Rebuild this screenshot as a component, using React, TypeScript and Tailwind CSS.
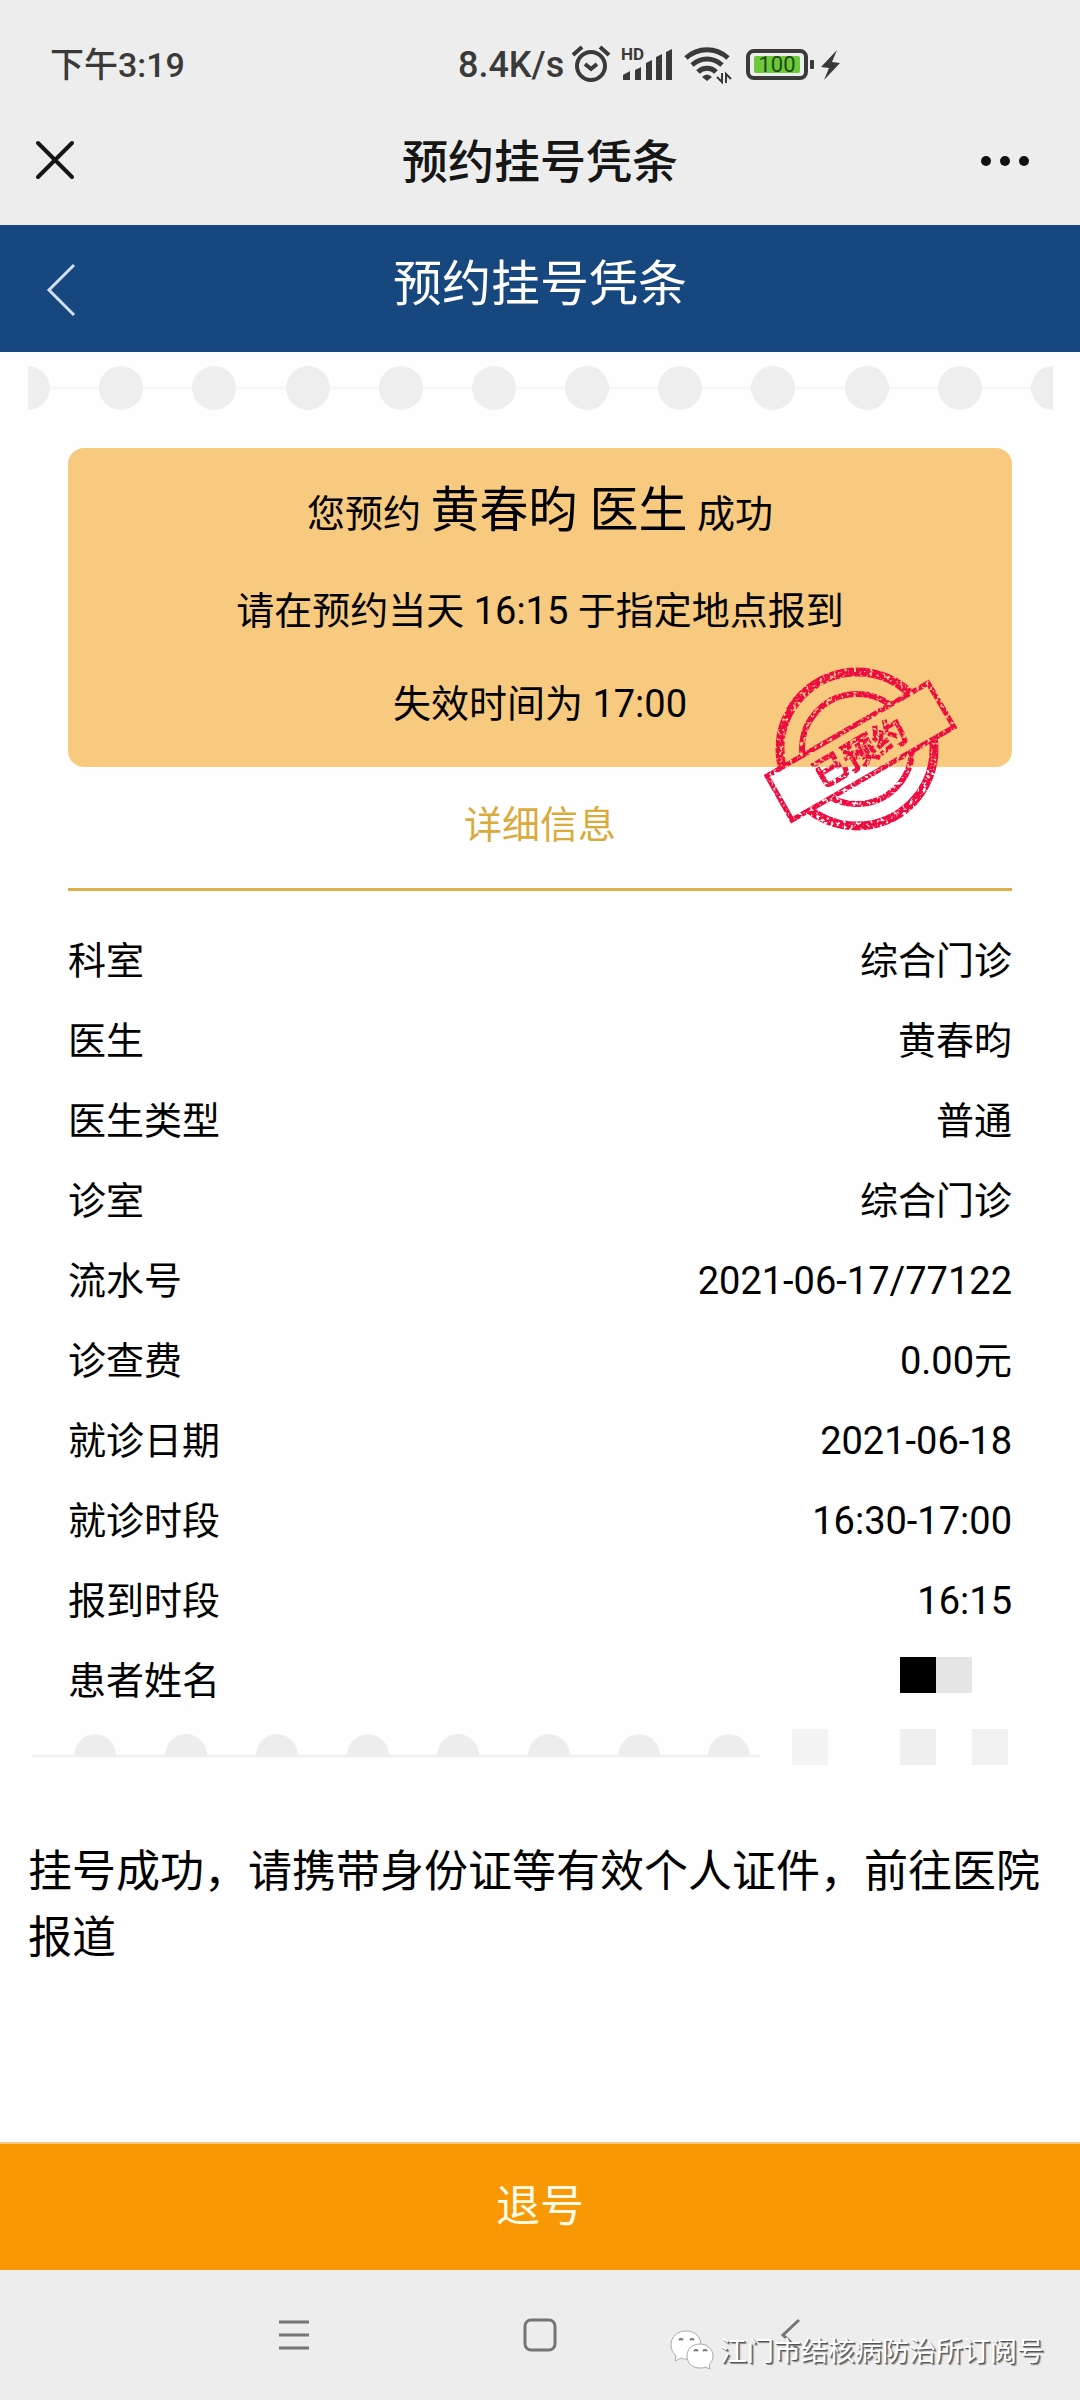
import React from 'react';

interface DetailRow {
  label: string;
  value?: string;
}

const details: DetailRow[] = [
  { label: '科室', value: '综合门诊' },
  { label: '医生', value: '黄春昀' },
  { label: '医生类型', value: '普通' },
  { label: '诊室', value: '综合门诊' },
  { label: '流水号', value: '2021-06-17/77122' },
  { label: '诊查费', value: '0.00元' },
  { label: '就诊日期', value: '2021-06-18' },
  { label: '就诊时段', value: '16:30-17:00' },
  { label: '报到时段', value: '16:15' },
  { label: '患者姓名' },
];

function StatusBar() {
  return (
    <div className="flex h-[100px] items-center gap-[273px] px-[50px] pt-[30px] text-[34px] font-medium text-[#3a3a3a]">
      <span>下午3:19</span>
      <div className="flex items-center">
        <span className="text-[36px]">8.4K/s</span>
        <StatusIcons />
      </div>
    </div>
  );
}

function StatusIcons() {
  return (
    <svg width="276" height="40" viewBox="0 0 276 40" className="ml-1" fill="none" stroke="#3a3a3a" aria-hidden="true">
      {/* alarm */}
      <circle cx="23" cy="21" r="14" strokeWidth="4" />
      <path d="M17 19l6 5 6-5" strokeWidth="4" />
      <path d="M5 10l9-8M41 10l-9-8" strokeWidth="4" />

      {/* signal */}
      <text x="53" y="15" fontSize="17" fontWeight="700" fill="#3a3a3a" stroke="none">HD</text>
      <path d="M55 30l7-4v9h-7zM67 25l6-3v13h-6zM78 18l6-3v20h-6zM88 12l6-3v26h-6zM98 7l6-3v31h-6z" fill="#3a3a3a" stroke="none" />

      {/* wifi */}
      <path d="M118 13c12-11 30-11 42 0" strokeWidth="5" />
      <path d="M124 20c9-8 21-8 30 0" strokeWidth="5" />
      <path d="M130 27c5-5 13-5 18 0" strokeWidth="5" />
      <path d="M134 32q5-5 10 0l-5 4z" fill="#3a3a3a" stroke="none" />
      <path d="M154 28v9l-5-5M158 38v-9l5 5" strokeWidth="2" />

      {/* battery */}
      <rect x="180" y="6" width="58" height="27" rx="6" strokeWidth="4" />
      <rect x="186" y="11" width="46" height="17" rx="2" fill="#6cc93a" stroke="none" />
      <text x="209" y="27" fontSize="22" fontWeight="400" textAnchor="middle" fill="#1f4a12" stroke="none">100</text>
      <rect x="242" y="15" width="4" height="9" rx="1" fill="#3a3a3a" stroke="none" />
      <path d="M269 5l-16 17 8 1-5 12 16-17-8-1z" fill="#3a3a3a" stroke="none" />
    </svg>
  );
}

function BrowserBar() {
  return (
    <div className="flex h-[125px] items-center justify-between px-8">
      <button type="button" aria-label="关闭" className="mb-1 flex w-[72px]">
        <svg width="44" height="44" viewBox="0 0 44 44" fill="none" stroke="#161616" strokeWidth="4" strokeLinecap="round">
          <path d="M6 4l34 34M40 4L6 38" />
        </svg>
      </button>
      <h1 className="text-[46px] font-medium text-[#161616]">预约挂号凭条</h1>
      <button type="button" aria-label="更多" className="mb-1 flex w-[72px]">
        <svg width="72" height="16" viewBox="0 0 72 16" fill="#111111">
          <circle cx="10" cy="8" r="5" />
          <circle cx="29" cy="8" r="5" />
          <circle cx="48" cy="8" r="5" />
        </svg>
      </button>
    </div>
  );
}

function PageHeader() {
  return (
    <header className="flex h-[127px] items-center justify-between bg-[#17477f] px-10 text-white">
      <button type="button" aria-label="返回" className="flex w-12">
        <svg width="40" height="56" viewBox="0 0 40 56" fill="none" stroke="#d3dff2" strokeWidth="3">
          <path d="M34 4L9 29l25 25" />
        </svg>
      </button>
      <h2 className="pb-2 text-[49px]">预约挂号凭条</h2>
      <span className="w-12" />
    </header>
  );
}

/* perforated edge along the top of the ticket */
function TopEdge() {
  return (
    <svg viewBox="0 0 1080 48" className="mt-3 block w-full" aria-hidden="true">
      <path d="M28 24h1025" stroke="#f6f6f6" strokeWidth="3" />
      <path d="M28 2a22 22 0 0 1 0 44zM1053 2a22 22 0 0 0 0 44z" fill="#eeeeee" />
      {[121, 214, 308, 401, 494, 587, 680, 773, 867, 960].map((cx) => (
        <circle key={cx} cx={cx} cy="24" r="22" fill="#eeeeee" />
      ))}
    </svg>
  );
}

function BottomEdge() {
  return (
    <svg viewBox="0 0 1080 44" className="mt-1 block w-full" aria-hidden="true">
      <path d="M32 31h728" stroke="#f1f1f1" strokeWidth="3" />
      {[95, 186, 277, 368, 458, 549, 639, 729].map((cx) => (
        <path key={cx} d={`M${cx - 21} 31a21 22 0 0 1 42 0z`} fill="#ededed" />
      ))}
      <rect x="792" y="4" width="36" height="36" fill="#f4f4f4" />
      <rect x="900" y="4" width="36" height="36" fill="#efefef" />
      <rect x="972" y="4" width="36" height="36" fill="#f1f1f1" />
    </svg>
  );
}

function Stamp() {
  return (
    <svg width="240" height="200" viewBox="0 0 240 200" className="absolute right-8 -bottom-[82px]" fill="none" stroke="#ee1140">
      <defs>
        <filter id="worn" filterUnits="userSpaceOnUse" x="0" y="0" width="240" height="200">
          <feTurbulence type="fractalNoise" baseFrequency="0.3" numOctaves="3" seed="4" result="noise" />
          <feColorMatrix in="noise" type="matrix" values="0 0 0 0 0  0 0 0 0 0  0 0 0 0 0  0 0 0 -6 4.2" result="holes" />
          <feComposite in="SourceGraphic" in2="holes" operator="in" />
        </filter>
        <clipPath id="outside">
          <path clipRule="evenodd" d="M0 0H240V200H0zM25 126L188 32L216 78L52 173z" />
        </clipPath>
      </defs>
      <g filter="url(#worn)">
        <g clipPath="url(#outside)">
          <circle cx="117" cy="100" r="77" strokeWidth="9" />
          <circle cx="117" cy="100" r="55" strokeWidth="6" />
        </g>
        <path d="M27 127L188 34L214 78L52 171z" strokeWidth="5" />
        <text
          x="120"
          y="116"
          fontSize="34"
          fontWeight="700"
          textAnchor="middle"
          fill="#ee1140"
          strokeWidth="1"
          transform="rotate(-30 120 104)"
        >
          已预约
        </text>
      </g>
    </svg>
  );
}

function DetailTable() {
  return (
    <table className="mt-[30px] w-full">
      <tbody>
        {details.map((row) => (
          <tr key={row.label} className="h-20">
            <th scope="row" className="text-left font-normal">{row.label}</th>
            <td className="text-right">
              {row.value ?? (
                <span className="mr-10 mb-3 flex justify-end">
                  <span className="size-9 bg-black" />
                  <span className="size-9 bg-[#e5e5e5]" />
                </span>
              )}
            </td>
          </tr>
        ))}
      </tbody>
    </table>
  );
}

function SystemNav() {
  return (
    <nav className="relative flex h-[130px] items-center justify-center gap-[210px] bg-[#ededed]">
      <button type="button" aria-label="最近任务">
        <svg width="36" height="36" viewBox="0 0 36 36" stroke="#757575" strokeWidth="3">
          <path d="M3 5h30M3 18h30M3 31h30" />
        </svg>
      </button>
      <button type="button" aria-label="主屏幕">
        <svg width="36" height="36" viewBox="0 0 36 36" fill="none" stroke="#757575" strokeWidth="3">
          <rect x="3" y="3" width="30" height="30" rx="6" />
        </svg>
      </button>
      <button type="button" aria-label="返回上一页">
        <svg width="36" height="36" viewBox="0 0 36 36" fill="none" stroke="#757575" strokeWidth="3">
          <path d="M31 3L15 18l16 15" />
        </svg>
      </button>

      {/* account watermark */}
      <div className="absolute right-9 bottom-[26px] flex items-center gap-1.5 text-[27px] text-white [text-shadow:1px_1px_0_#555,2px_2px_1px_#888]">
        <svg width="44" height="40" viewBox="0 0 44 40" className="mb-1" fill="#fff" stroke="#aaa" strokeWidth="1">
          <path d="M16 1C7 1 1 7 1 15c0 5 2 8 5 11l-1 5 6-3c2 1 3 1 5 1 9 0 15-6 15-14S25 1 16 1z" />
          <path d="M30 14c-8 0-13 5-13 12s5 12 13 12c2 0 4 0 5-1l5 2-1-4c2-2 4-5 4-9 0-7-6-12-13-12z" />
          <path d="M9 10q2-2 4 0M20 10q2-2 4 0M24 21q2-2 4 0M33 21q2-2 4 0" fill="none" stroke="#777" strokeWidth="2" />
        </svg>
        <span>江门市结核病防治所订阅号</span>
      </div>
    </nav>
  );
}

export default function App() {
  return (
    <div lang="zh-CN" className="flex min-h-screen flex-col bg-[#fefefe] font-[Roboto,'Noto_Sans_CJK_SC',sans-serif] text-black">
      <div className="bg-[#ededed]">
        <StatusBar />
        <BrowserBar />
      </div>
      <PageHeader />

      <main className="flex-1">
        <TopEdge />
        <div className="mx-[68px] mt-9 text-[38px]">
          <section className="relative rounded-2xl bg-[#f7ca80] py-4 text-center leading-[93px]">
            <p className="mb-1">
              您预约 <span className="text-[49px]">黄春昀 医生</span> 成功
            </p>
            <p>请在预约当天 16:15 于指定地点报到</p>
            <p>失效时间为 17:00</p>
            <Stamp />
          </section>
          <h3 className="border-b-3 border-[#dcb04a] pt-[26px] pb-[31px] text-center leading-[64px] text-[#d9ab3c]">详细信息</h3>
          <DetailTable />
        </div>
        <BottomEdge />
        <p className="mt-[70px] px-7 text-[44px] leading-[66px]">挂号成功，请携带身份证等有效个人证件，前往医院报道</p>
      </main>

      <button type="button" className="h-[128px] border-t-2 border-[#ecc988] bg-[#f79804] text-[44px] text-[#fffbe6]">
        退号
      </button>
      <SystemNav />
    </div>
  );
}
